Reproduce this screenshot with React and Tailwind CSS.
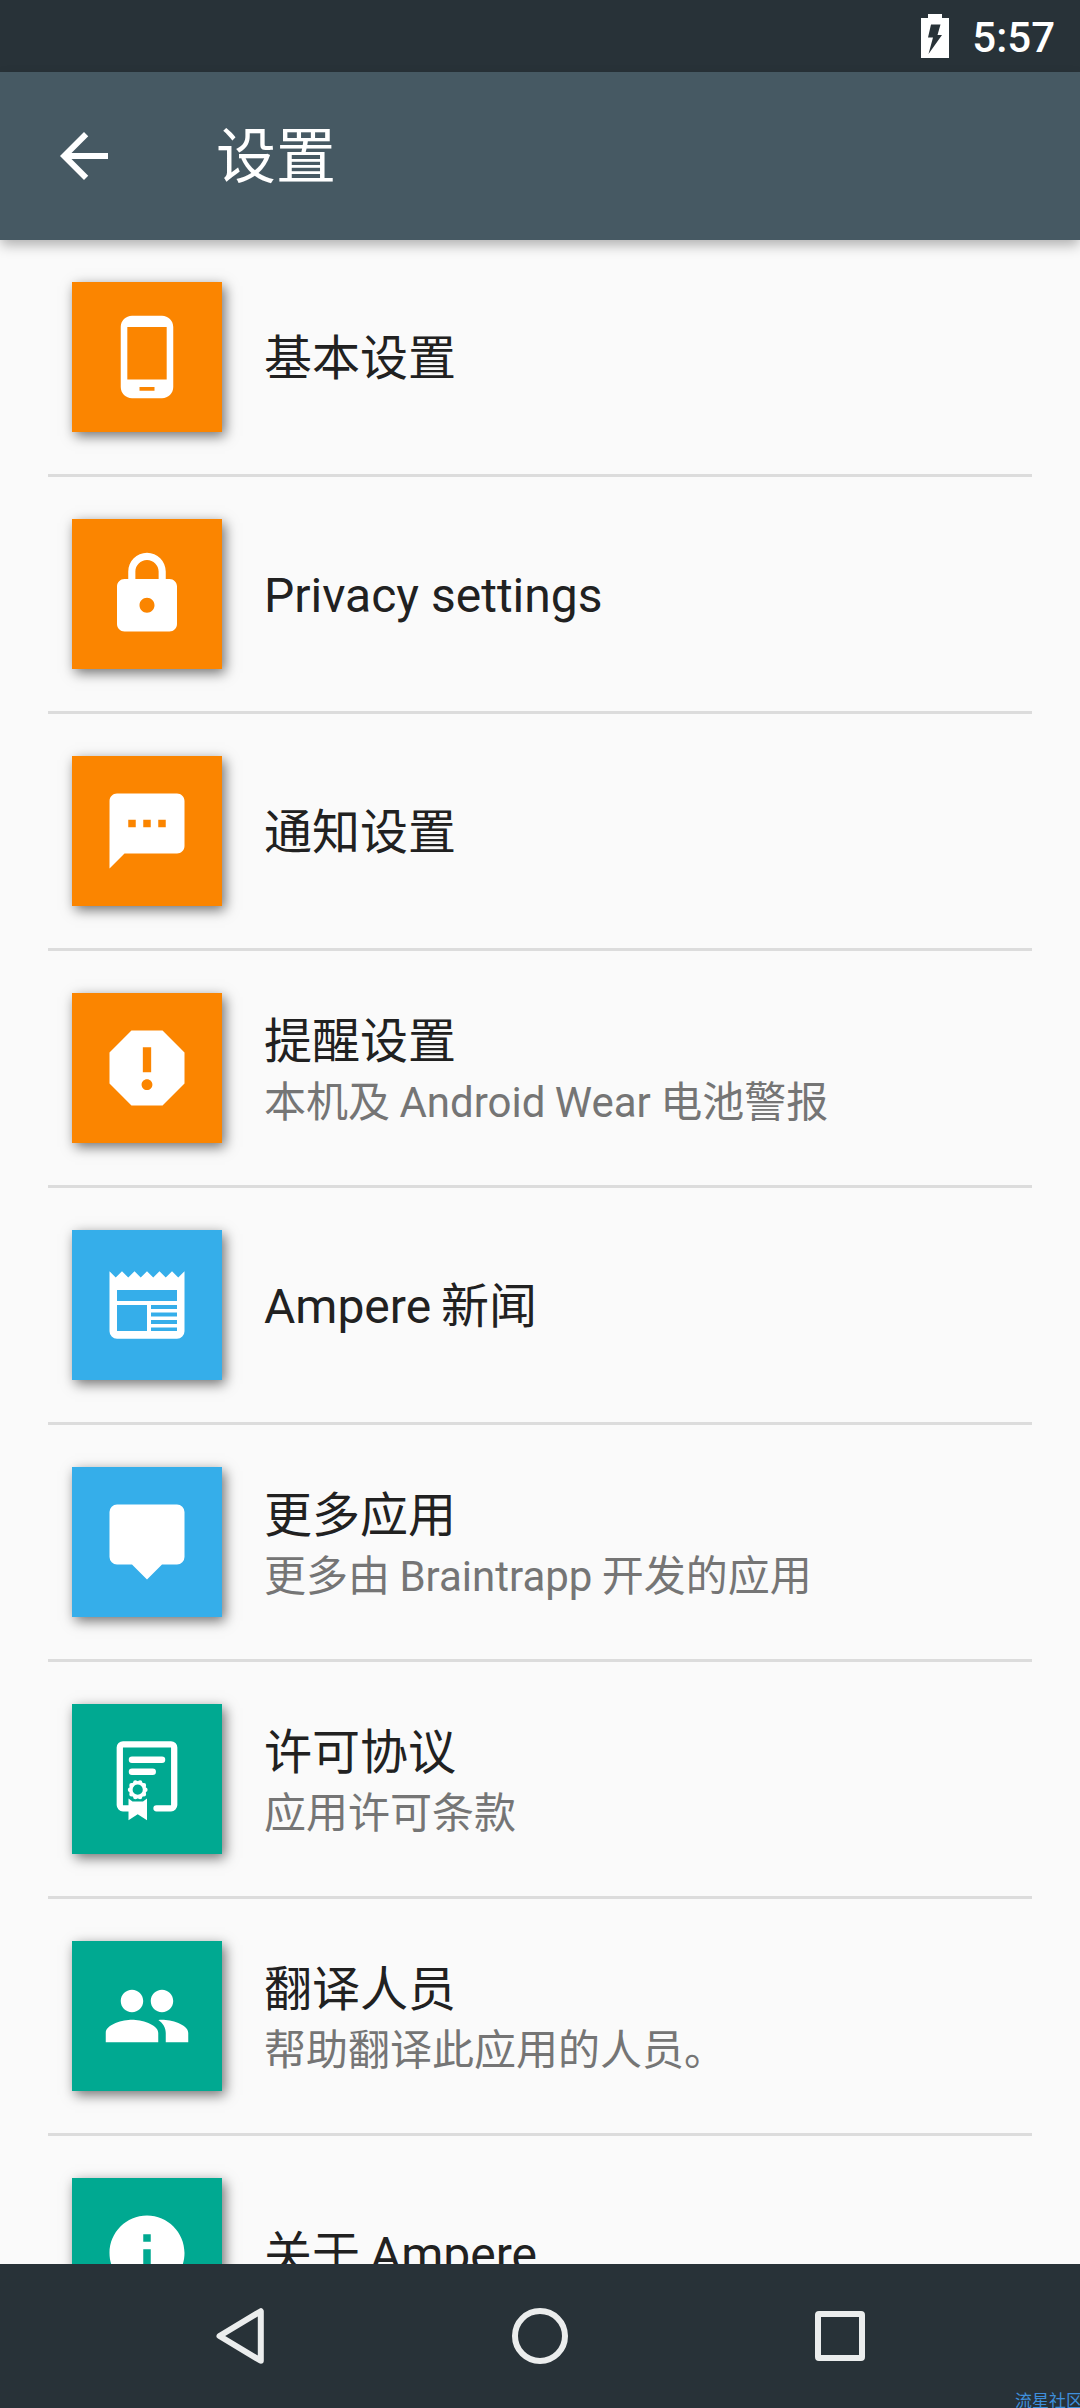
import React from 'react';
import { MdArrowBack, MdPhoneAndroid, MdLock, MdReport, MdPeople, MdInfo } from 'react-icons/md';

const SmsIcon = () => (
  <svg viewBox="0 0 24 24" className="size-[90px]" fill="currentColor">
    <path d="M20 2H4c-1.1 0-1.99.9-1.99 2L2 22l4-4h14c1.1 0 2-.9 2-2V4c0-1.1-.9-2-2-2zM9 11H7V9h2v2zm4 0h-2V9h2v2zm4 0h-2V9h2v2z" />
  </svg>
);

const NewspaperIcon = () => (
  <svg viewBox="0 0 24 24" className="size-[90px]" fill="currentColor" fillRule="evenodd">
    <path d="M20.33 4.67 18.67 3 17 4.67 15.33 3 13.67 4.67 12 3 10.33 4.67 8.67 3 7 4.67 5.33 3 3.67 4.67 2 3v16a2 2 0 0 0 2 2h16a2 2 0 0 0 2-2V3zM4 8h16v2.95H4zM4 12h8v6.95H4zM13.07 12H20v1.07h-6.93zM13.07 14H20v1.05h-6.93zM13.07 16H20v1.05h-6.93zM13.07 18H20v.95h-6.93z" />
  </svg>
);

const TooltipIcon = () => (
  <svg viewBox="0 0 24 24" className="size-[90px]" fill="currentColor">
    <path d="M4 2h16a2 2 0 0 1 2 2v12a2 2 0 0 1-2 2h-4l-4 4-4-4H4a2 2 0 0 1-2-2V4a2 2 0 0 1 2-2z" />
  </svg>
);

const LicenseIcon = () => (
  <svg viewBox="0 0 90 90" className="size-[90px]" fill="none" stroke="currentColor">
    <path d="M28 74.3H21a3.2 3.2 0 0 1-3.2-3.2V13.5a3.2 3.2 0 0 1 3.2-3.2h48a3.2 3.2 0 0 1 3.2 3.2v57.6a3.2 3.2 0 0 1-3.2 3.2H54.5" strokeWidth="6.3" strokeLinecap="round" />
    <path d="M30 25.7h30M30 37.8h20.7" strokeWidth="6.5" strokeLinecap="round" />
    <path d="M26.5 64.500l4 3h10.500l4-3v21.800l-9.300-6-9.200 6z" fill="currentColor" stroke="none" />
    {/* seal: solid ring with scalloped rim */}
    <circle cx="35.7" cy="55.7" r="6.9" strokeWidth="3.6" />
    <circle cx="35.7" cy="55.7" r="7.7" strokeWidth="4.4" strokeLinecap="round" pathLength="10" strokeDasharray="0 1" />
  </svg>
);

const items = [
  { title: '基本设置', color: 'bg-[#fb8500]', icon: <MdPhoneAndroid size={90} /> },
  { title: 'Privacy settings', color: 'bg-[#fb8500]', icon: <MdLock size={90} /> },
  { title: '通知设置', color: 'bg-[#fb8500]', icon: <SmsIcon /> },
  { title: '提醒设置', subtitle: '本机及 Android Wear 电池警报', color: 'bg-[#fb8500]', icon: <MdReport size={100} /> },
  { title: 'Ampere 新闻', color: 'bg-[#35aeea]', icon: <NewspaperIcon />, mixed: true },
  { title: '更多应用', subtitle: '更多由 Braintrapp 开发的应用', color: 'bg-[#35aeea]', icon: <TooltipIcon /> },
  { title: '许可协议', subtitle: '应用许可条款', color: 'bg-[#00a991]', icon: <LicenseIcon /> },
  { title: '翻译人员', subtitle: '帮助翻译此应用的人员。', color: 'bg-[#00a991]', icon: <MdPeople size={90} /> },
  { title: '关于 Ampere', color: 'bg-[#00a991]', icon: <MdInfo size={90} />, mixed: true },
];

function SettingsRow({ item }) {
  return (
    <li className="border-b-[3px] border-[#dcdcdc] pl-6 py-[42px]">
      <div className="flex h-[150px] gap-[42px]">
        <div className={`flex size-[150px] shrink-0 items-center justify-center text-white shadow-[3px_4px_12px_rgba(0,0,0,0.55)] ${item.color}`}>
          {item.icon}
        </div>
        <div className={item.subtitle ? 'pt-[21px]' : 'pt-[49px]'}>
          <h2 className={`text-[48px] leading-[56px] text-[#212121] ${item.mixed ? '[word-spacing:-2px]' : ''}`}>{item.title}</h2>
          {item.subtitle && (
            <p className="mt-2 text-[42px] leading-[49px] text-[#757575] [word-spacing:-1px]">{item.subtitle}</p>
          )}
        </div>
      </div>
    </li>
  );
}

function StatusBar() {
  return (
    <div className="flex h-[72px] shrink-0 items-center justify-end gap-[23px] bg-[#283238] pr-[25px] text-white">
      <svg width="28" height="44" viewBox="0 0 28 44">
        <path fillRule="evenodd" fill="currentColor" d="M7 0h14v4h7v40H0V4h7zM10 10.5h9.5L16.500 21h4.500L7.500 40l4.500-16.500H7z" />
      </svg>
      <span className="pt-[3px] text-[42px] leading-[50px] font-medium">5:57</span>
    </div>
  );
}

function NavigationBar() {
  return (
    <div className="relative z-10 flex h-36 shrink-0 items-center overflow-hidden bg-[#283238] px-[90px] text-[#ebeded]">
      <div className="flex flex-1 justify-center">
        <svg width="60" height="60" viewBox="0 0 60 60" fill="none" stroke="currentColor" strokeWidth="6" strokeLinejoin="round">
          <path d="M50.8 5.2v49.6L9.5 30z" />
        </svg>
      </div>
      <div className="flex flex-1 justify-center">
        <div className="size-14 rounded-full border-[6px] border-current" />
      </div>
      <div className="flex flex-1 justify-center">
        <div className="size-[50px] rounded-[4px] border-[6px] border-current" />
      </div>
      <span className="absolute top-[127px] left-[1015px] text-[17px] leading-[20px] whitespace-nowrap text-[#3f8fdc]">流星社区</span>
    </div>
  );
}

export default function App() {
  return (
    <div className="flex h-[2408px] w-[1080px] flex-col overflow-hidden bg-[#fafafa] font-[Roboto,'Noto_Sans_CJK_SC',sans-serif]">
      <StatusBar />
      <header className="relative z-10 flex h-[168px] shrink-0 items-center gap-24 bg-[#465963] pl-12 text-white shadow-[0_6px_12px_-1px_rgba(0,0,0,0.3)]">
        <MdArrowBack size={72} />
        <h1 className="pt-1 text-[60px] leading-[70px]">设置</h1>
      </header>
      <ul className="min-h-0 flex-1 overflow-hidden px-12">
        {items.map((item) => (
          <SettingsRow key={item.title} item={item} />
        ))}
      </ul>
      <NavigationBar />
    </div>
  );
}
